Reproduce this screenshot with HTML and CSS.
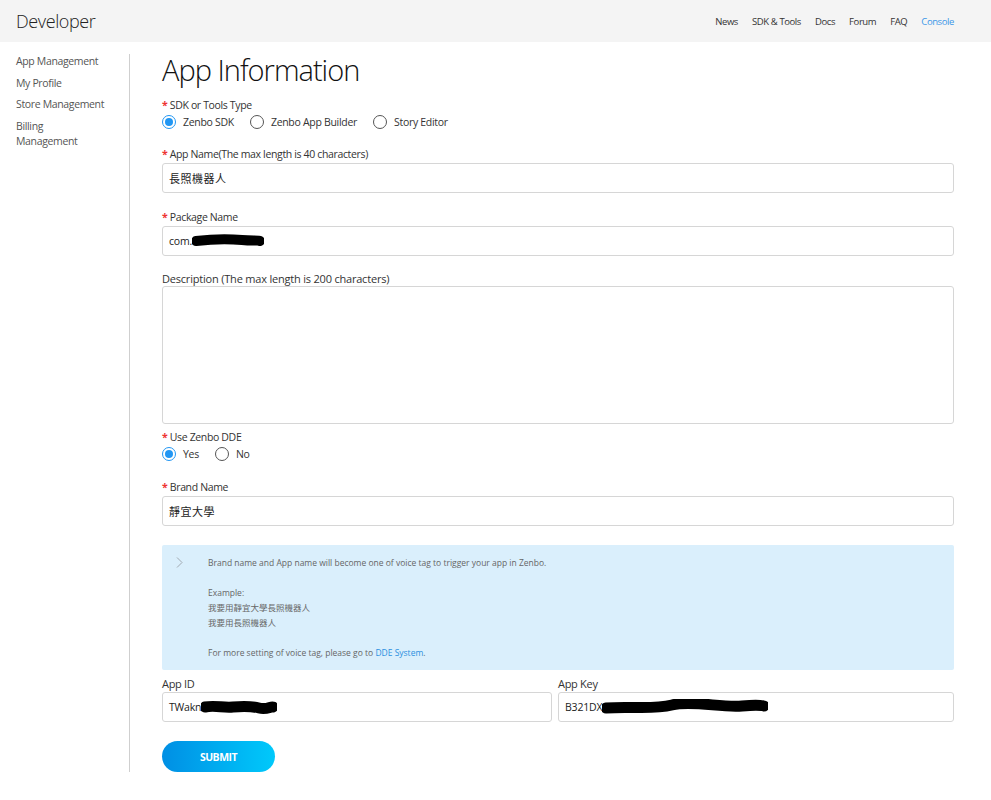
FILE: index.html
```html
<!DOCTYPE html>
<html lang="en">
<head>
<meta charset="utf-8">
<title>Developer - App Information</title>
<link rel="stylesheet" href="styles.css">
</head>
<body>
<header class="topbar">
  <div class="brand">Developer</div>
  <nav class="topnav">
    <a href="#">News</a>
    <a href="#">SDK &amp; Tools</a>
    <a href="#">Docs</a>
    <a href="#">Forum</a>
    <a href="#">FAQ</a>
    <a href="#" class="active">Console</a>
  </nav>
</header>
<div class="layout">
  <aside class="sidebar">
    <a href="#">App Management</a>
    <a href="#">My Profile</a>
    <a href="#">Store Management</a>
    <a href="#">Billing<br>Management</a>
  </aside>
  <main class="main">
    <h1 class="title">App Information</h1>

    <div class="field">
      <div class="label"><span class="req">*</span> SDK or Tools Type</div>
      <div class="radios">
        <label class="radio"><span class="dot checked"></span>Zenbo SDK</label>
        <label class="radio"><span class="dot"></span>Zenbo App Builder</label>
        <label class="radio"><span class="dot"></span>Story Editor</label>
      </div>
    </div>

    <div class="field">
      <div class="label"><span class="req">*</span> App Name(The max length is 40 characters)</div>
      <div class="input cjk">長照機器人</div>
    </div>

    <div class="field">
      <div class="label"><span class="req">*</span> Package Name</div>
      <div class="input">com.<svg class="redact" width="72" height="14" viewBox="0 0 72 14"><path d="M4 7 C20 5 40 5 50 6 S66 6 68 7" stroke="#000" stroke-width="10" stroke-linecap="round" fill="none"/></svg></div>
    </div>

    <div class="field field-desc">
      <div class="label desc">Description (The max length is 200 characters)</div>
      <div class="textarea"></div>
    </div>

    <div class="field tight">
      <div class="label"><span class="req">*</span> Use Zenbo DDE</div>
      <div class="radios">
        <label class="radio"><span class="dot checked"></span>Yes</label>
        <label class="radio"><span class="dot"></span>No</label>
      </div>
    </div>

    <div class="field">
      <div class="label"><span class="req">*</span> Brand Name</div>
      <div class="input cjk">靜宜大學</div>
    </div>

    <div class="info">
      <span class="chev"><svg width="7" height="11" viewBox="0 0 7 11"><path d="M1 0.5 L6 5.5 L1 10.5" stroke="#a0a8b0" stroke-width="1" fill="none"/></svg></span>
      <div class="info-text">
        <p>Brand name and App name will become one of voice tag to trigger your app in Zenbo.</p>
        <p>Example:<br><span class="cjk">我要用靜宜大學長照機器人</span><br><span class="cjk">我要用長照機器人</span></p>
        <p>For more setting of voice tag, please go to <a href="#">DDE System</a>.</p>
      </div>
    </div>

    <div class="cols">
      <div class="col">
        <div class="label plain">App ID</div>
        <div class="input">TWakn<svg class="redact" width="76" height="16" viewBox="0 0 76 16"><path d="M4 8 C14 6 22 9 32 8 S50 7 58 9 S70 7 72 8" stroke="#000" stroke-width="11" stroke-linecap="round" fill="none"/></svg></div>
      </div>
      <div class="col">
        <div class="label plain">App Key</div>
        <div class="input">B321DX<svg class="redact" width="166" height="16" viewBox="0 0 166 16"><path d="M4 9 C30 7 50 11 70 6 S120 9 140 7 S160 7 162 7" stroke="#000" stroke-width="11" stroke-linecap="round" fill="none"/></svg></div>
      </div>
    </div>

    <button class="submit" type="button">SUBMIT</button>
  </main>
</div>
</body>
</html>
```
FILE: styles.css
```css
* { box-sizing: border-box; }
html, body { margin: 0; padding: 0; background: #fff; }
body {
  font-family: "Open Sans", "Noto Sans", "Noto Sans CJK TC", sans-serif;
  color: #333;
  font-size: 11px;
}
a { text-decoration: none; color: inherit; }

.topbar {
  height: 42px;
  background: #f4f4f4;
  display: flex;
  align-items: center;
  justify-content: space-between;
  padding: 0 37px 0 16px;
}
.brand {
  font-size: 18px;
  font-weight: 300;
  color: #222;
  letter-spacing: -0.4px;
}
.topnav { display: flex; gap: 14px; font-size: 9.5px; letter-spacing: -0.4px; }
.topnav a { color: #333; }
.topnav a.active { color: #3b97e8; }

.layout { display: flex; padding-top: 12px; }
.sidebar {
  width: 130px;
  flex: none;
  border-right: 1px solid #cfcfcf;
  padding: 0 16px;
  display: flex;
  flex-direction: column;
  gap: 6.5px;
  min-height: 718px;
  font-size: 10.5px;
  letter-spacing: -0.35px;
}
.sidebar a { color: #555; line-height: 15px; }

.main { flex: 1; padding: 0 37px 0 32px; }
.title {
  margin: -2px 0 9px;
  font-size: 29px;
  font-weight: 300;
  color: #111;
  line-height: 36px;
  letter-spacing: -1px;
}

.field { margin-bottom: 16px; }
.field.tight { margin-bottom: 17px; }
.label {
  line-height: 17px;
  font-size: 10.5px;
  letter-spacing: -0.35px;
  color: #333;
}
.label .req { color: #e33; font-weight: bold; }
.label.desc { font-size: 11px; line-height: 14px; letter-spacing: -0.2px; }
.label.plain { font-size: 11px; letter-spacing: -0.3px; }

.radios { display: flex; gap: 16px; height: 16px; align-items: center; }
.radio { display: flex; align-items: center; gap: 7px; font-size: 10.5px; letter-spacing: -0.3px; }
.dot {
  width: 14px; height: 14px;
  border-radius: 50%;
  border: 1px solid #555;
  background: #fff;
  display: inline-block;
  position: relative;
}
.dot.checked { border-color: #2196f3; }
.dot.checked::after {
  content: "";
  position: absolute;
  left: 2px; top: 2px;
  width: 8px; height: 8px;
  border-radius: 50%;
  background: #2196f3;
}

.input {
  height: 30px;
  border: 1px solid #d6d6d6;
  border-radius: 3px;
  padding: 0 6px;
  display: flex;
  align-items: center;
  font-size: 10.5px;
  color: #222;
  letter-spacing: -0.2px;
}
.cjk { font-family: "Noto Sans CJK TC", sans-serif; }
.input.cjk { font-size: 11px; letter-spacing: 0.5px; }
.redact { display: block; flex: none; }

.textarea {
  height: 138px;
  border: 1px solid #d6d6d6;
  border-radius: 3px;
}
.field-desc { margin-bottom: 5px; }

.info {
  background: #daeffc;
  border-radius: 2px;
  padding: 10px 12px 10px 12px;
  display: flex;
  margin-top: 19px;
  margin-bottom: 5px;
}
.chev {
  width: 34px;
  flex: none;
  padding-left: 2px;
  padding-top: 2px;
  line-height: 0;
}
.info-text { font-size: 8.5px; color: #666; line-height: 15px; }
.info-text p { margin: 0 0 15px; }
.info-text p:last-child { margin-bottom: 0; }
.info-text .cjk { font-size: 8.5px; }
.info-text a { color: #2b8fe0; }

.cols { display: grid; grid-template-columns: 390px 1fr; gap: 6px; }

.submit {
  margin-top: 19px;
  width: 113px;
  height: 31px;
  border: 0;
  border-radius: 16px;
  background: linear-gradient(90deg, #008fe4, #00c9fb);
  color: #fff;
  font-family: "Open Sans", sans-serif;
  font-weight: 700;
  font-size: 10.5px;
  letter-spacing: -0.5px;
  cursor: pointer;
}
```
